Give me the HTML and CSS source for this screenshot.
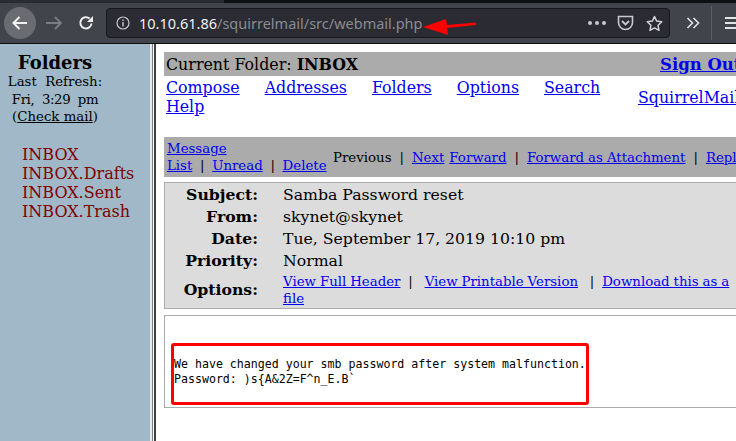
FILE: index.html
```html
<!DOCTYPE html>
<html lang="en">
<head>
<meta charset="utf-8">
<title>SquirrelMail</title>
<link rel="stylesheet" href="styles.css">
</head>
<body>
<header class="chrome">
  <div class="tabstrip"><div class="tabedge"></div></div>
  <div class="toolbar">
    <span class="backbtn">
      <svg width="20" height="20" viewBox="0 0 20 20"><path d="M17 10H4M9.5 4L3.5 10l6 6" fill="none" stroke="#f2f2f2" stroke-width="2"/></svg>
    </span>
    <svg class="tb-forward" width="18" height="18" viewBox="0 0 18 18"><path d="M1 9h15M10 3l6 6-6 6" fill="none" stroke="#7b7d83" stroke-width="1.8"/></svg>
    <svg class="tb-reload" width="16" height="16" viewBox="0 0 16 16"><path d="M13.5 8.5A5.6 5.6 0 1 1 11.6 3.6" fill="none" stroke="#eee" stroke-width="2"/><path d="M15 1v6H9z" fill="#eee"/></svg>
    <div class="urlbar">
      <svg class="info" width="14" height="14" viewBox="0 0 14 14"><circle cx="7" cy="7" r="6" fill="none" stroke="#c8c9cc" stroke-width="1.2"/><path d="M7 6v4.4M7 3.4v1.5" stroke="#c8c9cc" stroke-width="1.4"/></svg>
      <span class="url"><span class="host">10.10.61.86</span>/squirrelmail/src/webmail.php</span>
      <span class="dots"><i></i><i></i><i></i></span>
      <svg class="pocket" width="17" height="16" viewBox="0 0 17 16"><path d="M1.5 1.500h14v6a7 7 0 0 1-14 0z" fill="none" stroke="#c8c9cc" stroke-width="1.600"/><path d="M5 6l3.500 3.500L12 6" fill="none" stroke="#c8c9cc" stroke-width="1.800"/></svg>
      <svg class="star" width="17" height="17" viewBox="0 0 17 17"><path d="M8.500 1.500l2.200 4.600 5 .7-3.600 3.500.9 5-4.500-2.400L4 15.300l.9-5L1.300 6.800l5-.7z" fill="none" stroke="#d4d5d8" stroke-width="1.500" stroke-linejoin="round"/></svg>
    </div>
    <svg class="chev" width="14" height="12" viewBox="0 0 14 12"><path d="M1.500 1l5 5-5 5M7.500 1l5 5-5 5" fill="none" stroke="#e4e4e6" stroke-width="1.600"/></svg>
    <span class="sep"></span>
    <span class="burger"><i></i><i></i><i></i></span>
  </div>
</header>
<div class="frames">
  <aside class="side">
    <h1 class="side-title">Folders</h1>
    <div class="refresh">Last&nbsp; Refresh:<br><span class="refresh-time">Fri,&nbsp; 3:29&nbsp; pm</span><br>(<a href="#">Check mail</a>)</div>
    <ul class="folders">
      <li>INBOX</li>
      <li>INBOX.Drafts</li>
      <li>INBOX.Sent</li>
      <li>INBOX.Trash</li>
    </ul>
  </aside>
  <div class="divider"></div>
  <main class="main">
    <div class="folderbar">
      <span class="current">Current Folder: <b>INBOX</b></span>
      <a class="signout" href="#">Sign Out</a>
    </div>
    <nav class="nav">
      <div class="nav-left">
        <a href="#">Compose</a> <a href="#">Addresses</a> <a href="#">Folders</a> <a href="#">Options</a> <a href="#">Search</a> <a href="#">Help</a>
      </div>
      <a class="brand" href="#">SquirrelMail</a>
    </nav>
    <div class="msgbar">
      <div class="msgbar-left"><a href="#">Message</a><br><a href="#">List</a>&nbsp; |&nbsp; <a href="#">Unread</a>&nbsp; |&nbsp; <a href="#">Delete</a></div>
      <div class="msgbar-right">Previous&nbsp; |&nbsp; <a href="#">Next</a> <a class="fwd" href="#">Forward</a>&nbsp; |&nbsp; <a href="#">Forward as Attachment</a>&nbsp; |&nbsp; <a href="#">Reply</a></div>
    </div>
    <div class="headers">
      <div class="h-label">Subject:</div><div class="h-value">Samba Password reset</div>
      <div class="h-label">From:</div><div class="h-value">skynet@skynet</div>
      <div class="h-label">Date:</div><div class="h-value">Tue, September 17, 2019 10:10 pm</div>
      <div class="h-label">Priority:</div><div class="h-value">Normal</div>
      <div class="h-label h-options">Options:</div>
      <div class="h-value h-links"><a href="#">View Full Header</a>&nbsp; |&nbsp;&nbsp; <a href="#">View Printable Version</a>&nbsp;&nbsp; |&nbsp; <a href="#">Download this as a file</a></div>
    </div>
    <div class="body">
<pre class="mail">We have changed your smb password after system malfunction.
Password: )s{A&amp;2Z=F^n_E.B`</pre>
      <div class="redbox"></div>
    </div>
  </main>
</div>
<svg class="arrow" width="56" height="18" viewBox="0 0 56 18"><path d="M1 9L24 1l1 6 29-2.500v2.500L25 10l1 7z" fill="#f00"/></svg>
</body>
</html>
```
FILE: styles.css
```css
* { box-sizing: border-box; }
html, body { margin: 0; height: 100%; overflow: hidden; }
body { width: 736px; height: 441px; position: relative; background: #fff; font-family: "DejaVu Serif", serif; color: #000; }
a { color: #00e; }

.chrome { height: 44px; background: #42444c; border-bottom: 1px solid #0c0c0d; }
.tabstrip { height: 3px; background: #2a2b31; display: flex; justify-content: flex-end; }
.tabedge { width: 512px; height: 3px; background: #0f1013; }
.toolbar { height: 40px; display: flex; align-items: center; padding-left: 4px; overflow: hidden; }
.backbtn { width: 32px; height: 32px; border-radius: 50%; background: #6b6c72; display: flex; align-items: center; justify-content: center; flex: none; }
.tb-forward { margin-left: 9px; flex: none; }
.tb-reload { margin-left: 15px; flex: none; }
.urlbar { margin-left: 12px; width: 564px; height: 30px; flex: none; background: #2a2b33; border: 1px solid #17181b; border-radius: 4px; display: flex; align-items: center; padding-left: 9px; }
.url { margin-left: 9px; font-family: "Noto Sans", sans-serif; font-size: 14.500px; color: #8a8c92; white-space: nowrap; flex: 1; }
.host { color: #f2f2f2; }
.dots { display: flex; gap: 3px; }
.dots i { width: 4px; height: 4px; border-radius: 50%; background: #c8c9cc; }
.pocket { margin-left: 11px; }
.star { margin-left: 12px; margin-right: 6px; }
.chev { margin-left: 16px; flex: none; }
.sep { width: 1px; height: 34px; background: #5d5f66; margin-left: 11px; flex: none; }
.burger { margin-left: 13px; width: 14px; flex: none; display: flex; flex-direction: column; gap: 3px; }
.burger i { height: 2px; background: #e4e4e6; }

.frames { display: flex; height: 397px; }
.side { width: 150px; flex: none; background: #a0b8c8; padding-top: 8px; }
.side-title { margin: 0 0 -1px; width: 110px; text-align: center; font-size: 18px; line-height: 22px; font-weight: bold; }
.refresh { width: 110px; text-align: center; font-size: 13.300px; line-height: 17.500px; white-space: nowrap; }
.refresh-time { letter-spacing: -0.400px; }
.refresh a { color: #000; }
.folders { list-style: none; margin: 19px 0 0; padding: 0 0 0 22px; font-size: 16px; line-height: 19px; color: #800000; }
.divider { width: 6px; flex: none; background: linear-gradient(to right, #e8e8e8 2px, #808080 2px 3px, #fff 3px 4px, #404040 4px); }
.main { flex: 1; min-width: 0; padding: 8px 0 0 8px; overflow: hidden; }

.folderbar { width: 640px; height: 24px; background: #ababab; display: flex; align-items: center; padding-left: 2px; font-size: 15.850px; white-space: nowrap; }
.current { width: 494px; flex: none; }
.signout { font-size: 16.500px; font-weight: bold; }

.nav { width: 640px; height: 61px; display: flex; padding: 2px 0 0 2px; font-size: 15.800px; }
.nav-left { width: 472px; flex: none; line-height: 19px; }
.nav-left a { margin-right: 20px; }
.brand { margin-top: 10px; white-space: nowrap; }

.msgbar { width: 640px; height: 40px; background: #ababab; display: flex; align-items: center; padding-left: 3px; font-size: 13.330px; white-space: nowrap; }
.msgbar-left { line-height: 17px; width: 166px; flex: none; word-spacing: -0.400px; }
.msgbar-right { word-spacing: -0.250px; }
.fwd { margin-left: 1px; }

.headers { width: 640px; margin-top: 5px; background: #dcdcdc; border: 1px solid #ababab; display: grid; grid-template-columns: 93px 1fr; column-gap: 25px; padding-top: 1px; font-size: 15.700px; }
.h-label { font-weight: bold; text-align: right; line-height: 22px; }
.h-value { line-height: 22px; white-space: nowrap; }
.h-options { align-self: center; }
.h-links { font-size: 13.330px; line-height: 16.500px; white-space: normal; width: 470px; padding: 2px 0 1px; word-spacing: -0.300px; }

.body { width: 640px; height: 93px; margin-top: 6px; border: 1px solid #ababab; position: relative; padding: 41px 0 0 9px; }
.mail { margin: 0; font-family: "DejaVu Sans Mono", monospace; font-size: 11.600px; line-height: 15px; white-space: pre; }
.redbox { position: absolute; left: 6px; top: 27px; width: 418px; height: 62px; border: 3px solid #f00; border-radius: 3px; }

.arrow { position: absolute; left: 422px; top: 18px; }
```
